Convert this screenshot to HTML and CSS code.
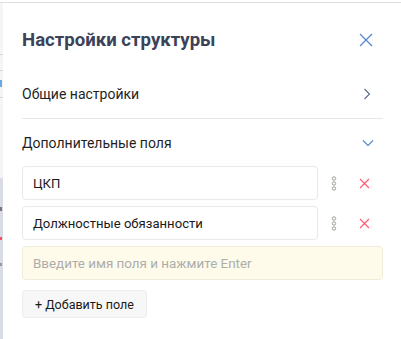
FILE: index.html
```html
<!DOCTYPE html>
<html lang="ru">
<head>
    <meta charset="UTF-8">
    <title>Настройки структуры</title>
    <link rel="stylesheet" href="styles.css">
</head>
<body>
    <div class="topline"></div>
    <div class="page">
        <div class="backdrop">
            <div class="bd-top">
                <div class="bd-line l1"></div>
                <div class="bd-line l2"></div>
                <div class="bd-mark blue"></div>
                <div class="bd-line l3"></div>
            </div>
            <div class="bd-bottom">
                <div class="bd-mark dark"></div>
                <div class="bd-mark red"></div>
                <div class="bd-mark gray"></div>
            </div>
        </div>

        <div class="panel">
            <div class="panel-header">
                <h2>Настройки структуры</h2>
                <button class="icon-btn close" title="Закрыть">
                    <svg width="14" height="14" viewBox="0 0 14 14"><path d="M1 1L13 13M13 1L1 13" stroke="#4f86cf" stroke-width="1.2" fill="none"/></svg>
                </button>
            </div>

            <div class="section-row">
                <span>Общие настройки</span>
                <svg width="8" height="12" viewBox="0 0 8 12"><path d="M1.5 1L6.5 6L1.5 11" stroke="#5c6b85" stroke-width="1.1" fill="none"/></svg>
            </div>

            <div class="section-row">
                <span>Дополнительные поля</span>
                <svg width="12" height="8" viewBox="0 0 12 8"><path d="M1 1.5L6 6.5L11 1.5" stroke="#4f86cf" stroke-width="1.1" fill="none"/></svg>
            </div>

            <div class="fields">
                <div class="field-row">
                    <div class="field">ЦКП</div>
                    <span class="drag">
                        <svg width="6" height="15" viewBox="0 0 6 15"><circle cx="3" cy="2.5" r="1.7"/><circle cx="3" cy="7.5" r="1.7"/><circle cx="3" cy="12.5" r="1.7"/></svg>
                    </span>
                    <span class="remove">
                        <svg width="11" height="11" viewBox="0 0 11 11"><path d="M1 1L10 10M10 1L1 10" stroke="#ff5a6e" stroke-width="1.2" fill="none"/></svg>
                    </span>
                </div>
                <div class="field-row">
                    <div class="field">Должностные обязанности</div>
                    <span class="drag">
                        <svg width="6" height="15" viewBox="0 0 6 15"><circle cx="3" cy="2.5" r="1.7"/><circle cx="3" cy="7.5" r="1.7"/><circle cx="3" cy="12.5" r="1.7"/></svg>
                    </span>
                    <span class="remove">
                        <svg width="11" height="11" viewBox="0 0 11 11"><path d="M1 1L10 10M10 1L1 10" stroke="#ff5a6e" stroke-width="1.2" fill="none"/></svg>
                    </span>
                </div>
                <input class="new-field" type="text" placeholder="Введите имя поля и нажмите Enter">
            </div>

            <button class="add-btn">+ Добавить поле</button>
        </div>
    </div>
</body>
</html>
```

FILE: styles.css
```css
body {
    margin: 0;
    background: #fff;
    font-family: Roboto, Arial, sans-serif;
    color: #333;
}
.topline {
    margin-top: 2px;
    height: 1px;
    background: #dedede;
}
.page {
    display: flex;
    height: 336px;
}
.backdrop {
    width: 3px;
    display: flex;
    flex-direction: column;
}
.bd-top {
    height: 175px;
    background: #f5f5f5;
    position: relative;
}
.bd-bottom {
    flex: 1;
    background: #d9dbe5;
    position: relative;
}
.bd-line {
    position: absolute;
    left: 0;
    width: 3px;
    height: 1px;
    background: #d6d6d6;
}
.l1 { top: 51px; }
.l2 { top: 67px; }
.l3 { top: 94px; }
.bd-mark {
    position: absolute;
    left: 0;
    width: 2px;
}
.blue { top: 77px; height: 7px; background: #6aa8e0; }
.dark { top: 29px; height: 4px; background: #777; }
.red { top: 59px; height: 3px; background: #e55; }
.gray { top: 85px; height: 3px; background: #999; }

.panel {
    flex: 1;
    padding: 0 18px 0 19px;
}
.panel-header {
    display: flex;
    align-items: center;
    justify-content: space-between;
    height: 67px;
    padding-top: 6px;
    box-sizing: border-box;
}
.panel-header h2 {
    margin: 0;
    font-size: 18.6px;
    font-weight: 700;
    color: #3c4257;
}
.icon-btn {
    background: none;
    border: none;
    padding: 0;
    cursor: pointer;
    display: flex;
}
.close {
    margin-right: 10px;
}
.section-row {
    display: flex;
    align-items: center;
    justify-content: space-between;
    height: 48px;
    font-size: 14px;
    color: #1f1f1f;
    padding-right: 12px;
}
.section-row + .section-row {
    border-top: 1px solid #e7e8ee;
    height: 47px;
    padding-right: 9px;
}
.fields {
    display: flex;
    flex-direction: column;
    gap: 6px;
}
.field-row {
    display: flex;
    align-items: center;
}
.field {
    width: 296px;
    box-sizing: border-box;
    height: 34px;
    border: 1px solid #e9e9e9;
    border-radius: 4px;
    padding: 0 10px;
    display: flex;
    align-items: center;
    font-size: 13.1px;
    color: #1a1a1a;
}
.drag {
    display: flex;
    margin-left: 13px;
}
.drag svg circle {
    fill: none;
    stroke: #a09d95;
    stroke-width: 1;
}
.remove {
    display: flex;
    margin-left: 22px;
}
.new-field {
    height: 34px;
    box-sizing: border-box;
    border: 1px solid #f0ecd9;
    background: #fefbea;
    border-radius: 4px;
    padding: 0 10px;
    font-family: inherit;
    font-size: 13.4px;
    outline: none;
}
.new-field::placeholder {
    color: #adadad;
}
.add-btn {
    margin-top: 10px;
    height: 28px;
    padding: 0 12px;
    background: #f7f7f7;
    border: 1px solid #ececec;
    border-radius: 4px;
    font-family: inherit;
    font-size: 12.5px;
    color: #1a1a1a;
    cursor: pointer;
}
```
